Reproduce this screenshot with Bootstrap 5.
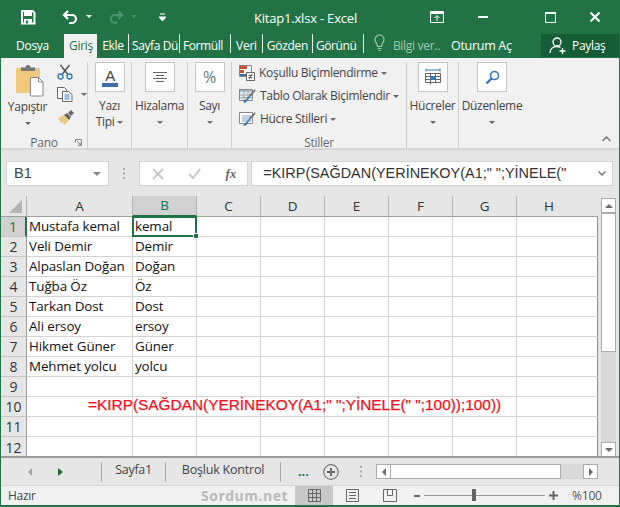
<!DOCTYPE html>
<html lang="tr">
<head>
<meta charset="UTF-8">
<title>Kitap1.xlsx - Excel</title>
<link href="https://cdn.jsdelivr.net/npm/bootstrap@5.3.0/dist/css/bootstrap.min.css" rel="stylesheet">
<style>
html, body { margin: 0; background: #fff; }
.xl-win { width: 620px; height: 507px; overflow: hidden; border-left: 1px solid #217346; border-right: 1px solid #217346; border-bottom: 2px solid #217346; font: 12px/16px "Open Sans", sans-serif; letter-spacing: -.3px; color: #444; background: #e6e6e6; }
svg { display: block; flex: none; }

/* title bar */
.xl-title { height: 34px; background: #217346; color: #fff; font-size: 13px; }
.m-undo { margin-left: 26px; } .m-c1 { margin-left: 7px; } .m-redo { margin-left: 16px; } .m-qat { margin-left: 22px; }
.m-save { margin-left: 19px; }
.xl-name { margin-left: 88px; margin-top: 2px; white-space: nowrap; letter-spacing: -.2px; }
.m-min { margin-left: 34px; } .m-max { margin-left: 57px; } .m-close { margin-left: 34px; margin-right: 19px; }

/* tabs */
.xl-tabs { height: 24px; background: #217346; color: #fff; white-space: nowrap; }
.xl-tab { overflow: hidden; text-align: center; line-height: 24px; height: 24px; }
.xl-tab + .xl-tab { border-left: 1px solid transparent; }
.xl-sep { width: 1px; height: 19px; background: #e8f0ec; flex: none; margin-top: 0; }
.t-dosya { width: 63px; } .t-giris { width: 33px; background: #f1f1f1; color: #217346; }
.t-ekle { width: 31px; } .t-sayfa { width: 50px; text-align: left; padding-left: 3px; letter-spacing: -.4px; } .t-form { width: 50px; text-align: left; padding-left: 3px; letter-spacing: -.4px; } .t-veri { width: 31px; }
.t-goz { width: 49px; } .t-gor { width: 50px; text-align: left; padding-left: 3px; letter-spacing: -.4px; }
.t-bilgi { color: #a3cbb4; margin-left: 10px; line-height: 24px; }
.t-bulb { margin-left: 10px; }
.t-otur { margin-left: 11px; line-height: 24px; width: 90px; font-size: 12.5px; }
.t-pay { width: 78px; height: 23px; background: #155c37; padding-left: 8px; gap: 5px; }

/* ribbon */
.xl-ribbon { height: 92px; background: #f1f1f1; border-bottom: 2px solid #d6d6d6; position: relative; }
.xl-grp { height: 86px; margin-top: 4px; border-right: 1px solid #d0d0d0; flex: none; text-align: center; }
.g-pano { width: 87px; } .g-yazi { width: 44px; } .g-hiza { width: 56px; } .g-sayi { width: 44px; } .g-stil { width: 175px; } .g-huc { width: 52px; } .g-duz { width: 66px; border: 0; }
.xl-grp-body { height: 74px; }
.xl-grp-name { line-height: 14px; color: #666; position: relative; }
.xl-big { width: 30px; height: 30px; border: 1px solid #c6c6c6; background: #fdfdfd; margin: 0 auto 6px; }
.xl-big + div { line-height: 16px; white-space: nowrap; }
.xl-caret { display: inline-block; width: 0; height: 0; border: 3px solid transparent; border-top: 3px solid #6b6b6b; border-bottom: 0; vertical-align: middle; }
.xl-caretline { line-height: 16px; height: 16px; }
.p-main { width: 53px; padding-left: 0; }
.p-img { margin: 2px 0 2px 14px; }
.p-side { gap: 7px; padding: 2px 0 0 3px; }
.p-launch { position: absolute; right: 5px; top: 3px; }
.s-body { padding: 3px 0 0 7px; gap: 7px; text-align: left; }
.s-row { gap: 4px; height: 16px; white-space: nowrap; }
.xl-chev { position: absolute; right: 8px; bottom: 6px; }

/* formula bar */
.xl-fbar { height: 46px; padding: 11px 6px 10px 5px; background: #e6e6e6; }
.xl-box { height: 25px; background: #fff; border: 1px solid #d4d4d4; }
.f-name { width: 103px; font: 14.6px/23px "Liberation Sans", sans-serif; letter-spacing: 0; padding: 0 7px; color: #444; }
.f-name .xl-caret { border-width: 4px 4px 0; border-top-color: #888; }
.f-dots { width: 30px; }
.f-fx { width: 110px; padding: 0 11px 0 12px; }
.f-val { margin-left: 3px; width: 363px; font: 14.45px/23px "Liberation Sans", sans-serif; letter-spacing: 0; padding: 0 6px 0 11px; color: #333; white-space: nowrap; }
.fx-mark { font: italic 700 13px/23px "Liberation Serif", serif; color: #666; letter-spacing: 0; }

/* sheet */
.xl-sheetwrap { height: 260px; }
.xl-sheet { table-layout: fixed; border-collapse: separate; border-spacing: 0; width: 597px; background: #fff; font: 13.4px/19px "Open Sans", sans-serif; letter-spacing: -.1px; color: #111; flex: none; }
.c-rh { width: 26px; } .c-a { width: 106px; } .c-s { width: 64px; } .c-l { width: 81px; }
.xl-sheet th, .xl-sheet td { height: 20px; padding: 0; box-sizing: border-box; }
.xl-sheet td { border-right: 1px solid #d4d4d4; border-bottom: 1px solid #d4d4d4; padding-left: 2px; white-space: nowrap; }
.xl-sheet thead th { background: #e6e6e6; border-right: 1px solid #b4b4b4; border-bottom: 1px solid #9f9f9f; font: 13.5px/19px "Open Sans", sans-serif; text-align: center; color: #333; }
.xl-sheet tbody th { background: #e6e6e6; border-right: 1px solid #9f9f9f; border-bottom: 1px solid #c6c6c6; font: 14px/19px "Open Sans", sans-serif; text-align: center; color: #333; }
.xl-sheet thead th.x-on { background: #d2d2d2; color: #217346; border-bottom: 2px solid #217346; }
.xl-sheet tbody th.x-on { background: #d2d2d2; color: #217346; border-right: 2px solid #217346; }
.x-corner { padding: 0; }
.x-h { text-align: left !important; padding-left: 27px !important; border-right: 0 !important; }
.xl-sheet td:last-child { border-right: 1px solid #8f8f8f; }
.xl-sheet tbody tr:last-child td { border-bottom: 0; }
.xl-sheet tbody tr:last-child th { border-bottom: 0; }
.x-sel { position: relative; }
.x-sel::after { content: ""; position: absolute; inset: -1px -1px -1px -1px; border: 2px solid #217346; pointer-events: none; }
.x-hnd { position: absolute; right: -3px; bottom: -3px; background: #217346; border: 1px solid #fff; z-index: 2; box-sizing: content-box; width: 4px; height: 4px; }
.xl-sheet td.x-red { color: #f5101c; font: 15.4px/15px "Liberation Sans", sans-serif; letter-spacing: 0; padding: 0 0 4px 61px; -webkit-text-stroke: .25px #f5101c; }

/* scrollbars */
.xl-vs { width: 21px; padding: 2px 3px 0 3px; }
.xl-sbtn { height: 15px; width: 15px; background: #fff; border: 1px solid #ababab; }
.xl-track { background: #d9d9d9; height: 229px; width: 15px; }
.xl-thumb { background: #fff; border: 1px solid #ababab; width: 15px; height: 139px; }
.xl-tri-u { width: 0; height: 0; border: 4px solid transparent; border-bottom: 4px solid #6a6a6a; border-top: 0; }
.xl-tri-d { width: 0; height: 0; border: 4px solid transparent; border-top: 4px solid #6a6a6a; border-bottom: 0; }
.xl-tri-l { width: 0; height: 0; border: 4px solid transparent; border-right: 4px solid #6a6a6a; border-left: 0; }
.xl-tri-r { width: 0; height: 0; border: 4px solid transparent; border-left: 4px solid #6a6a6a; border-right: 0; }

/* sheet tabs */
.xl-sheets { height: 29px; border-top: 2px solid #9a9a9a; background: #e6e6e6; color: #444; font-size: 12.5px; }
.a-l { margin-left: 27px; } .a-r { margin-left: 26px; }
.sh-sep { width: 1px; height: 20px; background: #a9a9a9; flex: none; }
.sh-1 { margin-left: 38px; } .sh-t1 { width: 63px; text-align: center; margin-top: -4px; }
.sh-t2 { width: 114px; text-align: center; letter-spacing: -.2px; margin-top: -4px; }
.sh-more { margin-left: 17px; width: 18px; color: #217346; font-weight: 700; line-height: 14px; letter-spacing: 0; }
.sh-add { margin-left: 7px; }
.sh-dots { margin-left: 21px; }
.xl-hs { margin-left: 14px; width: 222px; height: 15px; }
.hs-btn { width: 15px; height: 15px; background: #fff; border: 1px solid #ababab; flex: none; }
.hs-thumb { width: 170px; background: #fff; border: 1px solid #ababab; border-left: 0; height: 15px; }
.hs-track { width: 22px; background: #d9d9d9; height: 15px; }

/* status */
.xl-status { height: 20px; background: #f1f1f1; border-top: 1px solid #d6d6d6; position: relative; }
.st-ready { margin-left: 7px; width: 193px; color: #444; }
.st-mark { width: 94px; color: #b9b9b9; font: 700 14px/19px "Open Sans", sans-serif; letter-spacing: .5px; white-space: nowrap; }
.st-view { width: 38px; height: 19px; background: #c8c8c8; }
.st-v2 { margin-left: 13px; } .st-v3 { margin-left: 24px; }
.st-minus { margin-left: 17px; width: 6px; height: 2px; background: #666; }
.st-slide { margin-left: 4px; width: 121px; height: 1px; background: #9a9a9a; position: relative; }
.st-knob { position: absolute; left: 48px; top: -6px; width: 4px; height: 12px; background: #666; }
.st-plus { margin-left: 4px; }
.st-zoom { margin-left: 14px; color: #555; letter-spacing: -.2px; }
</style>
</head>
<body>
<div class="xl-win d-flex flex-column">

  <div class="xl-title d-flex align-items-center">
    <svg class="m-save" width="16" height="16" viewBox="0 0 16 16"><path d="M2 2h10.500L14.500 4v10.500H2z" fill="none" stroke="#fff" stroke-width="2"/><rect x="4" y="2" width="8" height="5" fill="#fff"/><rect x="4" y="10" width="8" height="5" fill="#fff"/><rect x="6" y="11.500" width="2" height="3" fill="#217346"/></svg>
    <svg class="m-undo" width="17" height="16" viewBox="0 0 17 16"><path d="M6 2 2 6l4 4M2.500 6H10a4 4 0 0 1 0 8H7" fill="none" stroke="#fff" stroke-width="2.200"/></svg>
    <svg class="m-c1" width="6" height="4" viewBox="0 0 6 4"><path d="M0 0h6L3 3z" fill="#fff"/></svg>
    <svg class="m-redo" width="16" height="16" viewBox="0 0 17 16"><path d="M11 2l4 4-4 4M14.500 6H7a4 4 0 0 0 0 8h3" fill="none" stroke="#4f9071" stroke-width="2.200"/></svg>
    <svg class="m-c1" width="6" height="4" viewBox="0 0 6 4"><path d="M0 0h6L3 3z" fill="#4f9071"/></svg>
    <svg class="m-qat" width="7" height="9" viewBox="0 0 7 9"><path d="M1 1h5M0 4h7L3.500 8z" stroke="#fff" fill="#fff"/></svg>
    <div class="xl-name">Kitap1.xlsx - Excel</div>
    <div class="ms-auto d-flex align-items-center">
      <svg width="14" height="12" viewBox="0 0 14 12"><path d="M.5 2.500h13v9H.5z" fill="none" stroke="#fff"/><path d="M.5 .5h13v2H.5z" fill="#fff" stroke="#fff"/><path d="M7 10V5M4.500 7 7 4.500 9.500 7" fill="none" stroke="#fff"/></svg>
      <svg class="m-min" width="10" height="2" viewBox="0 0 10 2"><rect width="10" height="2" fill="#fff"/></svg>
      <svg class="m-max" width="11" height="11" viewBox="0 0 11 11"><path d="M.5 1.500h10v9H.5z" fill="none" stroke="#fff"/><rect width="11" height="2" fill="#fff"/></svg>
      <svg class="m-close" width="10" height="10" viewBox="0 0 10 10"><path d="M.5.500l9 9M9.500.5l-9 9" stroke="#fff" stroke-width="2"/></svg>
    </div>
  </div>

  <div class="xl-tabs d-flex">
    <div class="xl-tab t-dosya">Dosya</div>
    <div class="xl-tab t-giris">Giriş</div>
    <div class="xl-tab t-ekle">Ekle</div><div class="xl-sep"></div>
    <div class="xl-tab t-sayfa">Sayfa Dü</div><div class="xl-sep"></div>
    <div class="xl-tab t-form">Formüll</div><div class="xl-sep"></div>
    <div class="xl-tab t-veri">Veri</div><div class="xl-sep"></div>
    <div class="xl-tab t-goz">Gözden</div><div class="xl-sep"></div>
    <div class="xl-tab t-gor">Görünü</div><div class="xl-sep"></div>
    <svg class="t-bulb" width="11" height="18" viewBox="0 0 11 18"><path d="M3.500 12.500C3.500 9.500 1 8.500 1 5.500a4.500 4.500 0 0 1 9 0c0 3-2.500 4-2.500 7zM3.500 14.500h4M4.500 16.500h2" fill="none" stroke="#a3cbb4" stroke-width="1.200"/></svg>
    <div class="t-bilgi ms-2">Bilgi ver..</div>
    <div class="t-otur">Oturum Aç</div>
    <div class="t-pay d-flex align-items-center">
      <svg width="18" height="17" viewBox="0 0 18 17"><circle cx="8" cy="5" r="4" fill="none" stroke="#fff" stroke-width="1.300"/><path d="M1 16c0-4 3-6.500 7-6.500 1.500 0 2.500.3 3.500.8" fill="none" stroke="#fff" stroke-width="1.300"/><path d="M13.500 11v6M10.500 14h6" stroke="#fff" stroke-width="1.300"/></svg>
      <span>Paylaş</span>
    </div>
  </div>

  <div class="xl-ribbon d-flex">
    <div class="xl-grp g-pano position-relative">
      <div class="xl-grp-body d-flex">
        <div class="p-main">
          <svg class="p-img" width="30" height="33" viewBox="0 0 30 33"><rect x="1" y="4" width="24" height="25" fill="#f0c97f"/><path d="M6 7V3.500h4.500a2.500 2.500 0 0 1 5 0H20V7z" fill="#777"/><path d="M15.500 13.500h8l4.500 4.500v14H15.500z" fill="#fff" stroke="#8a8a8a"/><path d="M23.500 13.500V18H28" fill="none" stroke="#8a8a8a"/></svg>
          <div class="xl-caretline">Yapıştır</div>
          <div class="xl-caretline"><span class="xl-caret"></span></div>
        </div>
        <div class="p-side d-flex flex-column">
          <svg width="16" height="16" viewBox="0 0 16 16"><path d="M3.500 1l7 9M12.500 1l-7 9" stroke="#555" stroke-width="1.500"/><circle cx="3.500" cy="12.500" r="2.500" fill="none" stroke="#2f78bd" stroke-width="1.300"/><circle cx="12.500" cy="12.500" r="2.500" fill="none" stroke="#2f78bd" stroke-width="1.300"/></svg>
          <div class="d-flex align-items-center gap-2">
            <svg width="16" height="15" viewBox="0 0 16 15"><path d="M.5.500h7l2 2v9H.5z" fill="#fff" stroke="#666"/><path d="M5.500 4.500h6l3.500 3v7H5.500z" fill="#fff" stroke="#666"/><path d="M7.500 8h5M7.500 10h5M7.500 12h5" stroke="#2f78bd"/></svg>
            <span class="xl-caret"></span>
          </div>
          <svg width="18" height="16" viewBox="0 0 18 16"><path d="M1 9l6-3 5 5-4 5-2-1 1-2-3 1z" fill="#f0c97f"/><path d="M7 6l3-2 4 4-2 3z" fill="#666"/><path d="M11 4l3-3 3 3-3 3z" fill="#666"/></svg>
        </div>
      </div>
      <div class="xl-grp-name">Pano
        <svg class="p-launch" width="7" height="7" viewBox="0 0 7 7"><path d="M.5 3.500v-3h6v6h-3M2 2l4 4M6 3.500V6H3.500" fill="none" stroke="#888"/></svg>
      </div>
    </div>
    <div class="xl-grp g-yazi">
      <div class="xl-grp-body">
        <div class="xl-big d-flex align-items-center justify-content-center">
          <svg width="16" height="19" viewBox="0 0 16 19"><text x="8" y="12.500" text-anchor="middle" font-family="Liberation Sans" font-size="15" fill="#444">A</text><rect y="15" width="16" height="4" fill="#3a6ea9"/></svg>
        </div>
        <div>Yazı</div>
        <div class="xl-caretline">Tipi <span class="xl-caret"></span></div>
      </div>
    </div>
    <div class="xl-grp g-hiza">
      <div class="xl-grp-body">
        <div class="xl-big d-flex align-items-center justify-content-center">
          <svg width="14" height="11" viewBox="0 0 14 11"><path d="M0 .5h14M3 3.500h8M0 6.500h14M3 9.500h8" stroke="#666"/></svg>
        </div>
        <div>Hizalama</div>
        <div class="xl-caretline"><span class="xl-caret"></span></div>
      </div>
    </div>
    <div class="xl-grp g-sayi">
      <div class="xl-grp-body">
        <div class="xl-big d-flex align-items-center justify-content-center fs-6 text-secondary">%</div>
        <div>Sayı</div>
        <div class="xl-caretline"><span class="xl-caret"></span></div>
      </div>
    </div>
    <div class="xl-grp g-stil">
      <div class="xl-grp-body s-body d-flex flex-column">
        <div class="s-row d-flex align-items-center">
          <svg width="16" height="16" viewBox="0 0 16 16"><path d="M.5.500h12v11H.5z" fill="#fff" stroke="#888"/><path d="M1 1h7v3H1z" fill="#d1532d"/><path d="M1 5h4v3H1z" fill="#d1532d"/><path d="M1 9h6v2H1z" fill="#3a6ea9"/><path d="M7.500 7.500h8v8h-8z" fill="#fff" stroke="#666"/><path d="M9.500 10.500h4M9.500 12.500h4M10 14l3-5" stroke="#444" stroke-width=".8"/></svg>
          <span>Koşullu Biçimlendirme <span class="xl-caret"></span></span>
        </div>
        <div class="s-row d-flex align-items-center">
          <svg width="17" height="16" viewBox="0 0 17 16"><path d="M.5 1.500h13v11H.5z" fill="#e4ebf3" stroke="#888"/><path d="M1 2h12v2H1z" fill="#a8bcd2"/><path d="M5 2v10M9 2v10M1 7h12M1 9.500h12" stroke="#a6a6a6"/><path d="M16 2l-8 8-1 1.500c-2 .5-2.500 2-2.500 3.500 2 0 3.500-1 4-3l1-1z" fill="#3a78b8"/><path d="M16 1l-6 6 1.500 1.500 5-5.500z" fill="#777"/></svg>
          <span>Tablo Olarak Biçimlendir <span class="xl-caret"></span></span>
        </div>
        <div class="s-row d-flex align-items-center">
          <svg width="17" height="16" viewBox="0 0 17 16"><path d="M.5 1.500h13v11H.5z" fill="#fff" stroke="#888"/><path d="M3 4h9v7H3z" fill="#bcd0e6"/><path d="M16 2l-8 8-1 1.500c-2 .5-2.500 2-2.500 3.500 2 0 3.500-1 4-3l1-1z" fill="#3a78b8"/><path d="M16 1l-6 6 1.500 1.500 5-5.500z" fill="#777"/></svg>
          <span>Hücre Stilleri <span class="xl-caret"></span></span>
        </div>
      </div>
      <div class="xl-grp-name">Stiller</div>
    </div>
    <div class="xl-grp g-huc">
      <div class="xl-grp-body">
        <div class="xl-big d-flex align-items-center justify-content-center">
          <svg width="16" height="18" viewBox="0 0 16 18"><path d="M1 .5v3M15 .5v3M1 2h14" stroke="#3a78b8"/><path d="M.5 5.500h15v9H.5zM.5 8.500h15M.5 11.500h15M5.500 5.500v11M10.500 5.500v9" fill="#fff" stroke="#666"/><rect x="5" y="8" width="6" height="4" fill="#3a78b8"/></svg>
        </div>
        <div>Hücreler</div>
        <div class="xl-caretline"><span class="xl-caret"></span></div>
      </div>
    </div>
    <div class="xl-grp g-duz">
      <div class="xl-grp-body">
        <div class="xl-big d-flex align-items-center justify-content-center">
          <svg width="15" height="15" viewBox="0 0 15 15"><circle cx="9.500" cy="5.500" r="4" fill="none" stroke="#3a78b8" stroke-width="1.600"/><path d="M6.500 8.500 1.500 13.500" stroke="#3a78b8" stroke-width="2.400"/></svg>
        </div>
        <div>Düzenleme</div>
        <div class="xl-caretline"><span class="xl-caret"></span></div>
      </div>
    </div>
    <svg class="xl-chev" width="9" height="6" viewBox="0 0 9 6"><path d="M.5 5l4-4 4 4" fill="none" stroke="#777" stroke-width="1.500"/></svg>
  </div>

  <div class="xl-fbar d-flex">
    <div class="xl-box f-name d-flex align-items-center justify-content-between"><span>B1</span><span class="xl-caret"></span></div>
    <div class="f-dots d-flex align-items-center justify-content-center">
      <svg width="2" height="11" viewBox="0 0 2 11"><path d="M0 0h2v2H0zM0 4.500h2v2H0zM0 9h2v2H0z" fill="#aaa"/></svg>
    </div>
    <div class="xl-box f-fx d-flex align-items-center justify-content-between">
      <svg width="12" height="12" viewBox="0 0 12 12"><path d="M1 1l10 10M11 1 1 11" stroke="#c8c8c8" stroke-width="2"/></svg>
      <svg width="13" height="11" viewBox="0 0 13 11"><path d="M1 6l4 4 7-9" fill="none" stroke="#c8c8c8" stroke-width="2"/></svg>
      <span class="fx-mark">fx</span>
    </div>
    <div class="xl-box f-val d-flex align-items-center justify-content-between">
      <span>=KIRP(SAĞDAN(YERİNEKOY(A1;" ";YİNELE("</span>
      <svg width="8" height="5" viewBox="0 0 8 5"><path d="M.5.500 4 4 7.500.5" fill="none" stroke="#777" stroke-width="1.500"/></svg>
    </div>
  </div>

  <div class="xl-sheetwrap d-flex">
    <table class="xl-sheet">
      <colgroup><col class="c-rh"><col class="c-a"><col class="c-s"><col class="c-s"><col class="c-s"><col class="c-s"><col class="c-s"><col class="c-s"><col class="c-l"></colgroup>
      <thead>
        <tr><th class="x-corner"><svg class="ms-auto me-1" width="13" height="13" viewBox="0 0 13 13"><path d="M13 0v13H0z" fill="#b4b4b4"/></svg></th><th>A</th><th class="x-on">B</th><th>C</th><th>D</th><th>E</th><th>F</th><th>G</th><th class="x-h">H</th></tr>
      </thead>
      <tbody>
        <tr><th class="x-on">1</th><td>Mustafa kemal</td><td class="x-sel">kemal<span class="x-hnd"></span></td><td></td><td></td><td></td><td></td><td></td><td></td></tr>
        <tr><th>2</th><td>Veli Demir</td><td>Demir</td><td></td><td></td><td></td><td></td><td></td><td></td></tr>
        <tr><th>3</th><td>Alpaslan Doğan</td><td>Doğan</td><td></td><td></td><td></td><td></td><td></td><td></td></tr>
        <tr><th>4</th><td>Tuğba Öz</td><td>Öz</td><td></td><td></td><td></td><td></td><td></td><td></td></tr>
        <tr><th>5</th><td>Tarkan Dost</td><td>Dost</td><td></td><td></td><td></td><td></td><td></td><td></td></tr>
        <tr><th>6</th><td>Ali ersoy</td><td>ersoy</td><td></td><td></td><td></td><td></td><td></td><td></td></tr>
        <tr><th>7</th><td>Hikmet Güner</td><td>Güner</td><td></td><td></td><td></td><td></td><td></td><td></td></tr>
        <tr><th>8</th><td>Mehmet yolcu</td><td>yolcu</td><td></td><td></td><td></td><td></td><td></td><td></td></tr>
        <tr><th>9</th><td></td><td></td><td></td><td></td><td></td><td></td><td></td><td></td></tr>
        <tr><th>10</th><td class="x-red">=KIRP(SAĞDAN(YERİNEKOY(A1;" ";YİNELE(" ";100));100))</td><td></td><td></td><td></td><td></td><td></td><td></td><td></td></tr>
        <tr><th>11</th><td></td><td></td><td></td><td></td><td></td><td></td><td></td><td></td></tr>
        <tr><th>12</th><td></td><td></td><td></td><td></td><td></td><td></td><td></td><td></td></tr>
      </tbody>
    </table>
    <div class="xl-vs">
      <div class="xl-sbtn d-flex align-items-center justify-content-center"><div class="xl-tri-u"></div></div>
      <div class="xl-track"><div class="xl-thumb"></div></div>
      <div class="xl-sbtn d-flex align-items-center justify-content-center"><div class="xl-tri-d"></div></div>
    </div>
  </div>

  <div class="xl-sheets d-flex align-items-center">
    <div class="xl-tri-l a-l opacity-50"></div>
    <svg class="a-r" width="5" height="8" viewBox="0 0 5 8"><path d="M0 0l5 4-5 4z" fill="#1b6b3e"/></svg>
    <div class="sh-sep sh-1"></div>
    <div class="sh-t1">Sayfa1</div>
    <div class="sh-sep"></div>
    <div class="sh-t2">Boşluk Kontrol</div>
    <div class="sh-sep"></div>
    <div class="sh-more">...</div>
    <svg class="sh-add" width="16" height="16" viewBox="0 0 16 16"><circle cx="8" cy="8" r="7.300" fill="none" stroke="#777" stroke-width="1.200"/><path d="M8 4v8M4 8h8" stroke="#666" stroke-width="1.800"/></svg>
    <svg class="sh-dots" width="2" height="11" viewBox="0 0 2 11"><path d="M0 0h2v2H0zM0 4.500h2v2H0zM0 9h2v2H0z" fill="#aaa"/></svg>
    <div class="xl-hs d-flex">
      <div class="hs-btn d-flex align-items-center justify-content-center"><div class="xl-tri-l"></div></div>
      <div class="hs-thumb"></div>
      <div class="hs-track"></div>
      <div class="hs-btn d-flex align-items-center justify-content-center"><div class="xl-tri-r"></div></div>
    </div>
  </div>

  <div class="xl-status d-flex align-items-center">
    <div class="st-ready">Hazır</div>
    <div class="st-mark">Sordum.net</div>
    <div class="st-view d-flex align-items-center justify-content-center">
      <svg width="13" height="13" viewBox="0 0 13 13"><path d="M.5.500h12v12H.5zM4.500.5v12M8.500.5v12M.5 4.500h12M.5 8.500h12" fill="none" stroke="#666"/></svg>
    </div>
    <svg class="st-v2" width="13" height="13" viewBox="0 0 13 13"><path d="M.5.500h12v12H.5z" fill="none" stroke="#666"/><path d="M3 3.500h7M3 6.500h7M3 9.500h7" stroke="#666"/></svg>
    <svg class="st-v3" width="14" height="13" viewBox="0 0 14 13"><path d="M.5.500h13v12H.5zM4.500.5v6h5v-6" fill="none" stroke="#666"/></svg>
    <div class="st-minus"></div>
    <div class="st-slide"><div class="st-knob"></div></div>
    <svg class="st-plus" width="9" height="9" viewBox="0 0 9 9"><path d="M4.500 0v9M0 4.500h9" stroke="#666" stroke-width="2"/></svg>
    <div class="st-zoom">%100</div>
  </div>
</div>
<script src="https://cdn.jsdelivr.net/npm/bootstrap@5.3.0/dist/js/bootstrap.bundle.min.js"></script>
</body>
</html>
